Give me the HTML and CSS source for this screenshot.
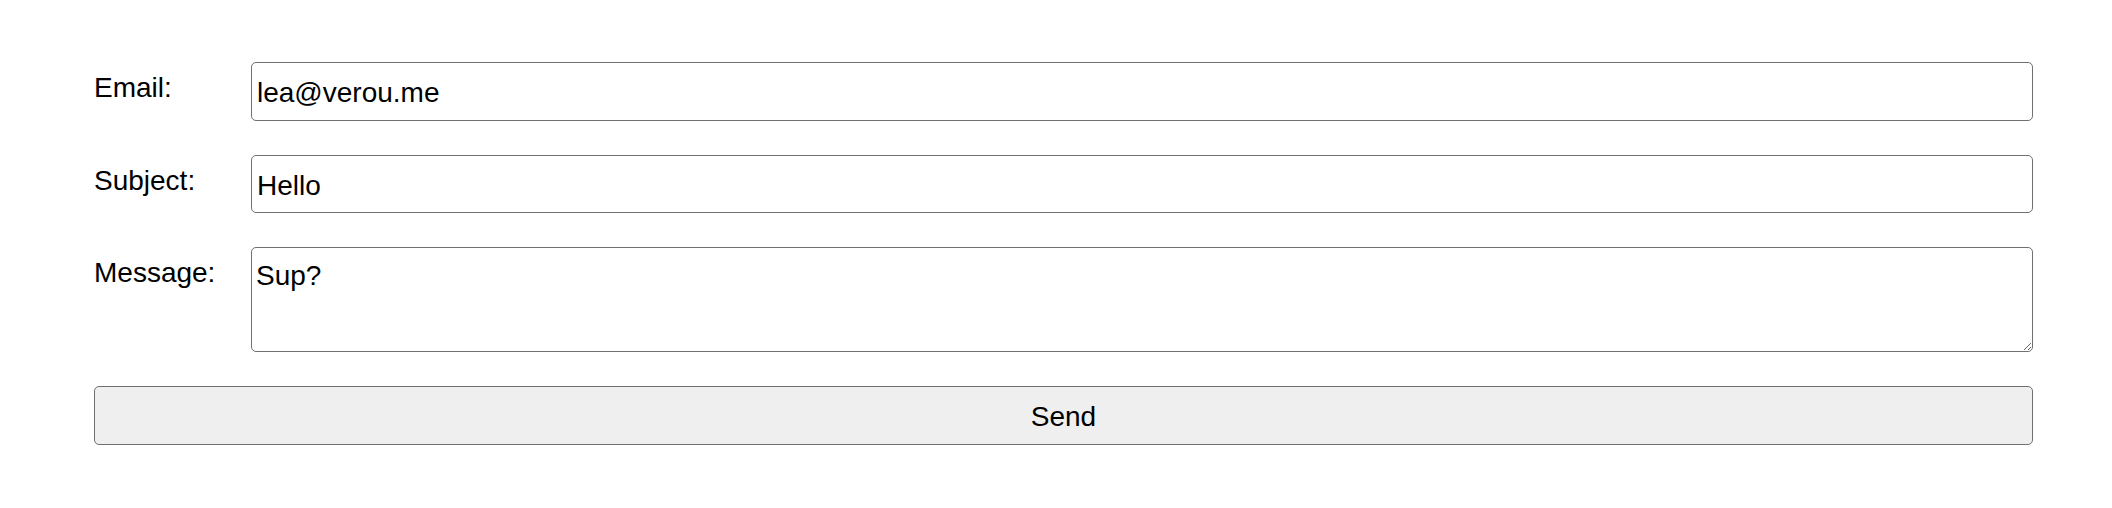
FILE: index.html
```html
<!DOCTYPE html>
<html lang="en">
<head>
<meta charset="utf-8">
<title>Contact form</title>
<link rel="stylesheet" href="styles.css">
</head>
<body>
<form class="contact">
  <label class="label" for="email">Email:</label>
  <input class="field field-email" id="email" type="email" value="lea@verou.me">
  <label class="label" for="subject">Subject:</label>
  <input class="field field-subject" id="subject" type="text" value="Hello">
  <label class="label" for="message">Message:</label>
  <textarea class="field field-message" id="message">Sup?</textarea>
  <button class="send" type="button">Send</button>
</form>
</body>
</html>
```
FILE: styles.css
```css
html, body {
  margin: 0;
  background: #ffffff;
}
body {
  padding: 62px 79px 0 94px;
  font-family: "Liberation Sans", Arial, Helvetica, sans-serif;
  font-size: 28px;
  color: #000000;
}
.contact {
  display: grid;
  grid-template-columns: 123px 1fr;
  column-gap: 34px;
  row-gap: 34px;
}
.label {
  font-size: 28px;
  line-height: 1.6;
  padding-top: 4px;
}
.field {
  box-sizing: border-box;
  margin: 0;
  font-family: "Liberation Sans", Arial, Helvetica, sans-serif;
  font-size: 28px;
  color: #000000;
  background: #ffffff;
  border: 1px solid #6f6f6f;
  border-radius: 5px;
  width: 100%;
  outline: none;
}
.field-email {
  height: 59px;
  padding: 3px 5px 0;
}
.field-subject {
  height: 58px;
  padding: 3px 5px 0;
}
.field-message {
  height: 105px;
  padding: 6px 4px 5px;
  line-height: 1.6;
  resize: both;
  display: block;
}
.send {
  grid-column: 1 / -1;
  box-sizing: border-box;
  height: 59px;
  margin: 0;
  padding: 3px 0 0;
  font-family: "Liberation Sans", Arial, Helvetica, sans-serif;
  font-size: 28px;
  color: #000000;
  background: #efefef;
  border: 1px solid #6f6f6f;
  border-radius: 5px;
}
```
